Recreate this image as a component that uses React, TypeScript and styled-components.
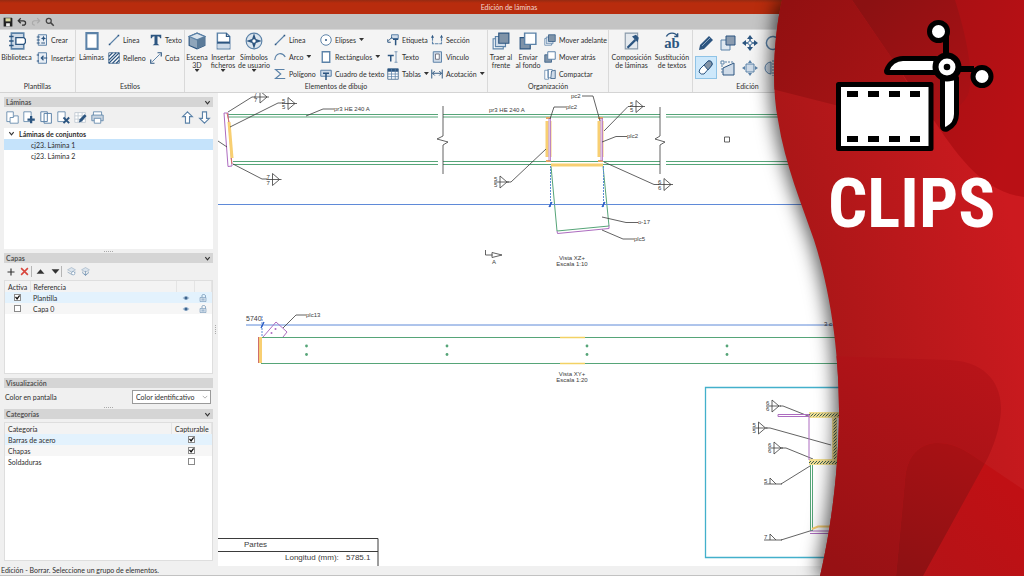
import React from "react";
import styled, { createGlobalStyle } from "styled-components";

const GlobalStyle = createGlobalStyle`
  *, *::before, *::after { box-sizing: border-box; }
  body {
    margin: 0;
    background: #f0f0f0;
    color: #2e2e2e;
    font: 400 7px/8px Lato, "Open Sans", sans-serif;
  }
  button, input, select { font: inherit; color: inherit; margin: 0; padding: 0; }
  button { background: none; border: 0; }
`;

/* ---------- shell ---------- */

const Screen = styled.div`
  position: relative;
  min-height: 100vh;
  overflow: hidden;
  display: flex;
  flex-direction: column;
`;

const TitleBar = styled.header`
  height: 14px;
  display: flex;
  align-items: center;
  justify-content: center;
  background: linear-gradient(#952b12, #b82c0d 3px);
  color: #f3d9d2;
  h1 { margin: 0; font: inherit; padding-right: 6px; }
`;

const QuickBar = styled.nav`
  height: 16px;
  padding: 0 1px;
  display: flex;
  align-items: center;
  background: #c4c4c4;
  border-bottom: 1px solid #d8d8d8;
`;

const QuickButton = styled.button`
  width: 14px;
  height: 14px;
  display: grid;
  place-items: center;
`;

const Ribbon = styled.div`
  height: 63px;
  display: flex;
  background: #f4f4f4;
  border-bottom: 1px solid #d4d4d4;
`;

const Group = styled.section<{ $w: number }>`
  flex: 0 0 ${(p) => p.$w}px;
  display: flex;
  flex-direction: column;
  border-right: 1px solid #d9d9d9;
`;

const GroupBody = styled.div<{ $pad?: number }>`
  flex: 1;
  display: flex;
  align-items: flex-start;
  padding-top: 1px;
  padding-left: ${(p) => p.$pad ?? 0}px;
`;

const GroupName = styled.h2`
  margin: 0;
  height: 10px;
  font: inherit;
  text-align: center;
`;

const BigButton = styled.button<{ $w: number }>`
  flex: 0 0 ${(p) => p.$w}px;
  display: flex;
  flex-direction: column;
  align-items: center;
  white-space: pre;
  padding-top: 1px;
  svg { margin-bottom: 3px; }
`;

const Column = styled.div<{ $w: number }>`
  flex: 0 0 ${(p) => p.$w}px;
  display: flex;
  flex-direction: column;
`;

const SmallButton = styled.button<{ $tall?: boolean }>`
  height: ${(p) => (p.$tall ? 18 : 17)}px;
  display: flex;
  align-items: center;
  gap: 3px;
  white-space: nowrap;
`;

const Caret = styled.span`
  width: 5px;
  height: 3px;
  background: #333;
  clip-path: polygon(0 0, 100% 0, 50% 100%);
`;

const EditGrid = styled.div`
  display: grid;
  grid-template-columns: repeat(4, 22px);
  grid-auto-rows: 25px;
`;

const EditButton = styled.button<{ $on?: boolean }>`
  width: 22px;
  height: 23px;
  display: grid;
  place-items: center;
  background: ${(p) => (p.$on ? "#cde8fb" : "none")};
  border: 1px solid ${(p) => (p.$on ? "#8fc3e6" : "transparent")};
`;

const Workspace = styled.main`
  flex: 1;
  display: flex;
  min-height: 0;
`;

const StatusBar = styled.footer`
  height: 10px;
  padding: 0 1px;
  background: #f0f0f0;
  border-bottom: 1px solid #c2c2c2;
`;

/* ---------- side panels ---------- */

const Side = styled.aside`
  flex: 0 0 218px;
  display: flex;
  background: #f0f0f0;
`;

const Panels = styled.div`
  flex: 1;
  display: flex;
  flex-direction: column;
  padding: 4px 0 5px 4px;
`;

const Gutter = styled.div`
  width: 5px;
  display: grid;
  place-items: center;
`;

const Panel = styled.section<{ $grow?: number; $h?: number }>`
  display: flex;
  flex-direction: column;
  flex: ${(p) => (p.$grow ? `1 1 ${p.$h}px` : `0 0 ${p.$h}px`)};
`;

const PanelHead = styled.h2`
  margin: 0;
  height: 10px;
  padding: 0 2px;
  display: flex;
  align-items: center;
  justify-content: space-between;
  background: #d5d5d5;
  font: inherit;
  font-weight: 700;
  color: #555;
`;

const Tools = styled.div<{ $h: number }>`
  height: ${(p) => p.$h}px;
  display: flex;
  align-items: center;
`;

const Tool = styled.button<{ $w: number }>`
  width: ${(p) => p.$w}px;
  height: 16px;
  display: grid;
  place-items: center;
`;

const ToolSpacer = styled.span`
  flex: 1;
`;

const ToolRule = styled.span`
  width: 1px;
  height: 11px;
  background: #b5b5b5;
`;

const Sheet = styled.div<{ $framed?: boolean }>`
  flex: 1;
  background: #fff;
  border: ${(p) => (p.$framed ? "1px solid #dedede" : "0")};
`;

const Splitter = styled.div<{ $h: number }>`
  height: ${(p) => p.$h}px;
  display: grid;
  place-items: center;
`;

const Tree = styled.ul`
  list-style: none;
  margin: 0;
  padding: 0;
`;

const TreeRow = styled.li<{ $on?: boolean; $root?: boolean }>`
  height: 11px;
  display: flex;
  align-items: center;
  gap: 4px;
  padding-left: ${(p) => (p.$root ? 4 : 27)}px;
  background: ${(p) => (p.$on ? "#c5e3fb" : "none")};
  font-weight: ${(p) => (p.$root ? 700 : 400)};
`;

const Table = styled.table`
  width: 100%;
  table-layout: fixed;
  border-collapse: collapse;
  th, td { height: 11px; padding: 0 3px; text-align: left; font-weight: 400; line-height: 8px; }
  th { background: #f3f3f3; border-right: 1px solid #e4e4e4; }
  td svg, td input { display: block; margin: 0 auto; }
`;

const Row = styled.tr<{ $tone?: "on" | "alt" }>`
  background: ${(p) => (p.$tone === "on" ? "#e3f2fd" : p.$tone === "alt" ? "#f6f6f6" : "#fff")};
`;

const Check = styled.input.attrs({ type: "checkbox" })`
  appearance: none;
  width: 7px;
  height: 7px;
  background: #fff;
  border: 1px solid #8a8a8a;
  &:checked::before {
    content: "";
    display: block;
    width: 5px;
    height: 5px;
    background: #111;
    clip-path: polygon(0 45%, 20% 30%, 40% 55%, 85% 0, 100% 20%, 42% 100%);
  }
`;

const Field = styled.div`
  height: 18px;
  padding: 0 2px 0 1px;
  display: flex;
  align-items: center;
  justify-content: space-between;
`;

const SelectBox = styled.span`
  width: 79px;
  height: 14px;
  display: flex;
  align-items: center;
  background: #fff;
  border: 1px solid #9a9a9a;
  padding-right: 2px;
  select {
    appearance: none;
    flex: 1;
    min-width: 0;
    height: 12px;
    padding-left: 3px;
    border: 0;
    background: none;
    line-height: 12px;
  }
`;

/* ---------- drawing and banner ---------- */

const Canvas = styled.div`
  flex: 1;
  min-width: 0;
  display: flex;
  background: #fff;
  > svg { width: 100%; height: 100%; min-height: 473px; }
`;

const Banner = styled.section`
  position: absolute;
  top: 0;
  right: 0;
  bottom: 0;
  width: 264px;
  display: flex;
  flex-direction: column;
  padding: 18px 28px 0 71px;
  color: #fff;
`;

const BannerShape = styled.svg`
  position: absolute;
  inset: 0;
  width: 100%;
  height: 100%;
  overflow: visible;
  filter: drop-shadow(-4px 0 9px rgba(0, 0, 0, 0.65));
`;

const BannerIcon = styled.svg`
  position: relative;
  width: 164px;
  height: 136px;
`;

const BannerTitle = styled.h2`
  position: relative;
  margin: 16px 0 0 -3px;
  font: 700 69px/68px "Roboto Condensed", "Liberation Sans Narrow", Roboto, sans-serif;
`;

/* ---------- icons ---------- */

const NAVY = "#2c5580";
const BLUE = "#5b82a8";
const PALE = "#cfdbe8";

const icons: Record<string, React.ReactNode> = {
  save: (<><path d="M1 1h13l1 1v13H1z" fill="#222" /><path d="M4 2h8v5H4z" fill="#d8d8a0" /><path d="M5 10h6v5H5z" fill="#eee" /></>),
  undo: <path d="M6 2 2 6l4 4M2 6h8c5 0 5 7 0 7H8" stroke="#333" strokeWidth="2" />,
  redo: <path d="m10 2 4 4-4 4M14 6H6c-5 0-5 7 0 7" stroke="#aaa" strokeWidth="1.8" />,
  search: (<><circle cx="6" cy="6" r="4" stroke="#444" strokeWidth="2" /><path d="m9 9 5 5" stroke="#444" strokeWidth="2.4" /></>),
  library: (<><path d="M3 1h11v14H3z" fill={PALE} stroke={BLUE} strokeWidth="1.4" /><path d="M1 4h4M1 8h4M1 12h4" stroke={NAVY} strokeWidth="1.2" /><path d="M7 5h7l1.500 1.500v3L14 11H7z" fill="#fff" stroke={NAVY} strokeWidth="1.2" /></>),
  create: (<><path d="M3 1h11v14H3z" fill="#e8eef5" stroke={BLUE} strokeWidth="1.300" /><path d="M1 4h4M1 8h4M1 12h4M7 12h5" stroke={NAVY} strokeWidth="1.300" /><path d="m10 2 1 2.500L13.500 6 11 7l-1 3-1-3-2.500-1L9 4.500z" fill={NAVY} /></>),
  insert: (<><path d="M3 1h11v14H3z" fill="#e8eef5" stroke={BLUE} strokeWidth="1.300" /><path d="M1 4h3M1 12h3M15 8H7m3-3L7 8l3 3" stroke={NAVY} strokeWidth="1.500" /></>),
  page: <path d="M3 1h10v14H3z" fill="#fff" stroke={BLUE} strokeWidth="1.800" />,
  line: (<><path d="M2 14 14 2" stroke={BLUE} strokeWidth="1.500" /><path d="M1 13h2v2H1zM13 1h2v2h-2z" fill={NAVY} /></>),
  hatch: (<><path d="M1 1h14v14H1z" fill="#fff" stroke={NAVY} /><path d="m1 6 5-5M1 11 11 1M1 15 15 1M6 15l9-9M11 15l4-4" stroke={NAVY} strokeWidth="1.500" /></>),
  text: <path d="M1 1h14v4.500h-1.500Q13.500 3 10 3v10l2.500 2h-9L6 13V3Q2.500 3 2.500 5.500H1z" fill={NAVY} />,
  measure: (<><path d="M3 13 13 3" stroke={BLUE} strokeWidth="1.300" /><path d="M10 1h5v5M1 10v5h5" stroke={NAVY} strokeWidth="1.600" /></>),
  scene: (<><path d="m8 1 7 3v8l-7 3-7-3V4z" fill="#8fa5ba" stroke={NAVY} /><path d="m1 4 7 3 7-3-7-3z" fill="#d9e3ec" stroke={BLUE} /><path d="M8 7v8l7-3V4z" fill="#5b7b99" /></>),
  file: (<><path d="M3 1h8l3 3v11H3z" fill="#fff" stroke={BLUE} strokeWidth="1.300" /><path d="M3 8.500h11v2H3z" fill={NAVY} /><path d="M3 10.500h11v4H3z" fill={PALE} /><path d="M11 1v3h3" stroke={NAVY} /></>),
  compass: (<><circle cx="8" cy="8" r="7" fill="#dbe5ee" stroke={BLUE} /><path d="m8 1 1.700 5.300L15 8 9.700 9.700 8 15 6.300 9.700 1 8l5.300-1.700z" fill={NAVY} /><circle cx="8" cy="8" r="1.500" fill="#fff" /></>),
  arc: <path d="M1 12C2 2 11 1 15 8" stroke={BLUE} strokeWidth="1.600" />,
  poly: <path d="M14 2H2l7 6-7 6h13" stroke={BLUE} strokeWidth="1.500" />,
  ellipse: (<><circle cx="8" cy="8" r="7" fill="#fff" stroke={BLUE} strokeWidth="1.300" /><circle cx="8" cy="8" r="1.300" fill={NAVY} /></>),
  box: (<><path d="M1 3h14v8H1z" fill={PALE} stroke={BLUE} strokeWidth="1.300" /><path d="M4 6h8v2H9v8H7V8H4z" fill={NAVY} /></>),
  tag: (<><path d="M6 1h9v5H6z" fill={PALE} stroke={BLUE} strokeWidth="1.300" /><path d="M7 4 2 9M1 7v4h4" stroke={NAVY} strokeWidth="1.300" /><path d="M8 6h7v2h-2.500v7h-2V8H8z" fill={NAVY} /></>),
  caret: (<><path d="M1 5h8v2H6v7H4V7H1z" fill={NAVY} /><path d="M12 1v14M10 1h4M10 15h4" stroke={BLUE} /></>),
  grid: (<><path d="M1 1h14v14H1z" fill="#fff" stroke={NAVY} /><path d="M1 1h14v4H1z" fill={NAVY} /><path d="M1 8h14M1 11.500h14M6 1v14M11 1v14" stroke={BLUE} /></>),
  section: (<><path d="M2 4v9h12V4" stroke={BLUE} strokeWidth="1.500" strokeDasharray="5 1" /><path d="m0 5 2-4 2 4zM12 5l2-4 2 4z" fill={NAVY} /></>),
  link: (<><path d="M3 1h11v14H3z" fill={PALE} stroke={BLUE} strokeWidth="1.300" /><path d="M6 4h5v7H6z" fill="#fff" stroke="#556" /></>),
  dimension: <path d="M1 2v12M15 2v12M2 7h12M5 4 2 7l3 3M11 4l3 3-3 3" stroke={NAVY} strokeWidth="1.300" />,
  front: (<><path d="M1 6h9v9H1z" fill="#fff" stroke={BLUE} /><path d="M3 4h9v9H3z" fill={PALE} stroke={BLUE} /><path d="M6 1h9v9H6z" fill="#7f93a8" stroke={NAVY} /></>),
  back: (<><path d="M1 5h9v10H1z" fill="#7f93a8" stroke={NAVY} /><path d="M5 1h10v10H5z" fill="#fff" stroke={BLUE} strokeWidth="1.300" /></>),
  compact: (<><path d="M1 3h5v12H1zM5 2h6v11H5z" fill="#fff" stroke={BLUE} /><path d="m10 4 5-1v11h-6z" fill={PALE} stroke={NAVY} /></>),
  compose: (<><path d="M2 1h11v14H2z" fill="#e4e9ee" stroke="#8899aa" /><path d="m4 14 7-7" stroke={NAVY} strokeWidth="2" /><path d="m8 4 5 5 1-4-2.500-2.500z" fill={NAVY} /></>),
  swap: <path d="M3 4c2-4 8-4 10 0m0-3v3h-3" stroke={NAVY} strokeWidth="1.300" />,
  pencil: (<><path d="M1 15 2 10 11 1l4 4-9 9z" fill={NAVY} /><path d="m4 11 8-8" stroke="#89a4bf" /></>),
  copy: (<><path d="M1 5h9v10H1z" fill="#dfe8f0" stroke={BLUE} /><path d="M6 1h9v9H6z" fill="#8b9cb0" stroke={NAVY} /></>),
  move: (<><path d="M8 0 5 4h6zM8 16l-3-4h6zM0 8l4-3v6zM16 8l-4-3v6z" fill={NAVY} /><path d="M8 3v3M8 10v3M3 8h3M10 8h3" stroke={NAVY} strokeWidth="1.500" /><circle cx="8" cy="8" r="2" stroke={BLUE} /></>),
  rotate: <path d="M14 12a6.500 6.500 0 1 1 0-8" stroke={BLUE} strokeWidth="1.500" />,
  erase: (<><path d="M2 9 10 1q3-1 4 2v2l-8 9q-3 1-5-2z" fill="#fff" stroke={NAVY} /><path d="m6 5 4-4q3-1 4 2v2l-4 5z" fill="#8293a5" stroke={NAVY} /></>),
  stretch: (<><path d="M3 8 14 3v12H3z" fill={PALE} stroke={NAVY} /><path d="M2 2h12M2 2v12" stroke={BLUE} strokeDasharray="2 1" /><path d="M1 1h3v3H1z" fill="#fff" stroke={BLUE} /></>),
  scale: (<><path d="M4 4h8v8H4z" fill={PALE} stroke={BLUE} /><path d="M8 0 6 3h4zM8 16l-2-3h4zM0 8l3-2v4zM16 8l-3-2v4z" fill={BLUE} /></>),
  mirror: (<><path d="M7 2a6 6 0 0 0 0 12z" fill={PALE} stroke={BLUE} /><path d="M9 0v16M11 3l3 2M11 7h4M11 11h4" stroke={BLUE} strokeDasharray="2 1" /></>),
  sheets: (<><path d="M1 1h8v12H1z" fill="#fff" stroke={BLUE} /><path d="M5 8h4l1-2h5v9H5z" fill="#fff" stroke={BLUE} /></>),
  add: (<><path d="M1 1h9v12H1z" fill="#fff" stroke={BLUE} /><path d="M10 6v9M5.500 10.500h9" stroke={NAVY} strokeWidth="2.800" /></>),
  dup: <path d="M1 1h8v12H1zM5 3h9v12H5z" fill="#fff" stroke={BLUE} strokeWidth="1.200" />,
  del: (<><path d="M1 1h9v12H1z" fill="#fff" stroke={BLUE} /><path d="m8 8 7 7m0-7-7 7" stroke={NAVY} strokeWidth="2.300" /></>),
  edit: (<><path d="M1 2h13v12H1zM1 6h13M1 10h13M5 2v12M10 2v12" fill="#fff" stroke="#bcc6d0" /><path d="m6 14 1-4 6-6 2.500 2-6 7z" fill={NAVY} /></>),
  print: (<><path d="M3 6V1h10v5" fill="#fff" stroke={BLUE} /><path d="M1 5h14v7H1z" fill="#c9d5e1" stroke={BLUE} /><path d="M4 9h8v6H4z" fill="#fff" stroke={BLUE} /></>),
  up: <path d="m8 1 6 6h-3.500v8h-5V7H2z" fill="#fff" stroke={BLUE} strokeWidth="1.400" />,
  down: <path d="m8 15 6-6h-3.500V1h-5v8H2z" fill="#fff" stroke={BLUE} strokeWidth="1.400" />,
  plus: <path d="M8 1v14M1 8h14" stroke="#333" strokeWidth="2.300" />,
  cross: <path d="m2 2 12 12M14 2 2 14" stroke="#d8453c" strokeWidth="2.800" />,
  triUp: <path d="M8 4 1 12h14z" fill="#333" />,
  triDown: <path d="M8 12 1 4h14z" fill="#333" />,
  layers: (<><path d="m8 1 7 4-7 4-7-4z" fill="#dbe4ed" stroke="#94a9bd" /><path d="m1 9 7 4 7-4" stroke="#94a9bd" strokeWidth="1.500" /><circle cx="11" cy="11" r="3" fill="#fff" stroke={BLUE} /></>),
  layersDown: (<><path d="m8 1 7 4-7 4-7-4z" fill="#dbe4ed" stroke="#94a9bd" /><path d="M3 8v3l5 3 5-3V8M8 7v8m-3-3 3 3 3-3" stroke={BLUE} /></>),
  eye: (<><path d="M1 8q7-8 14 0-7 8-14 0z" fill="#a9c0d8" /><circle cx="8" cy="8" r="3" fill="#3c648e" /></>),
  lock: (<><path d="M6 7V3q0-2 3-2t4 2v4" stroke={BLUE} strokeWidth="1.300" /><path d="M2 7h12v8H2z" fill="#dce6f0" stroke={BLUE} /><path d="M5 10h6M5 12h6" stroke={BLUE} /></>),
  chevron: <path d="m3 5 5 6 5-6" stroke="#333" strokeWidth="2.600" />,
  thin: <path d="m2 5 6 6 6-6" stroke="#777" strokeWidth="1.500" />,
};

function Icon({ name, size = 12 }: { name: string; size?: number }) {
  return (
    <svg width={size} height={size} viewBox="0 0 16 16" fill="none" aria-hidden="true">
      {icons[name]}
      {name === "swap" && (
        <text x="8" y="14" textAnchor="middle" fontFamily="Liberation Serif, serif" fontWeight="700" fontSize="13" fill={NAVY}>ab</text>
      )}
    </svg>
  );
}

function Big({ icon, w, label, menu }: { icon: string; w: number; label: string; menu?: boolean }) {
  return (
    <BigButton $w={w}>
      <Icon name={icon} size={18} />
      {label}
      {menu && <Caret />}
    </BigButton>
  );
}

type Item = [icon: string, label: string, menu?: boolean];

function SmallColumn({ w, items }: { w: number; items: Item[] }) {
  return (
    <Column $w={w}>
      {items.map(([icon, label, menu]) => (
        <SmallButton key={label} $tall={items.length === 2}>
          <Icon name={icon} />
          {label}
          {menu && <Caret />}
        </SmallButton>
      ))}
    </Column>
  );
}

const Dots = ({ vertical }: { vertical?: boolean }) => (
  <svg width={vertical ? 1 : 9} height={vertical ? 9 : 1} aria-hidden="true">
    <path d={vertical ? "M.5 0v9" : "M0 .5h9"} stroke="#aaa" strokeDasharray="1 1" />
  </svg>
);

function Head({ children, fold = true }: { children: React.ReactNode; fold?: boolean }) {
  return (
    <PanelHead>
      {children}
      {fold && <Icon name="chevron" size={7} />}
    </PanelHead>
  );
}

/* ---------- CAD sheet ---------- */

const INK = "#3b3b3b";
const GREEN = "#56a578";
const PURPLE = "#ad6cc0";
const YELLOW = "#f8cf72";

function Weld({ x, y, n, half }: { x: number; y: number; n: string; half?: boolean }) {
  return (
    <g>
      <path
        d={half ? `M${x - 6} ${y}H${x + 12}M${x} ${y}v-6l6 6` : `M${x - 6} ${y}H${x + 9}M${x} ${y - 6}v12l7-6z`}
        fill="none"
        stroke={INK}
        strokeWidth="0.8"
      />
      <text x={x - 6} y={y - 1}>{n}</text>
      {!half && <text x={x - 6} y={y + 5}>{n}</text>}
    </g>
  );
}

const rivets = [306.5, 447, 587, 727];

function Drawing() {
  return (
    <svg viewBox="218 93 806 473" preserveAspectRatio="xMinYMin slice" role="img" aria-label="Plano" fill="none" strokeWidth="1">
      <defs>
        <pattern id="steel" width="3" height="3" patternUnits="userSpaceOnUse">
          <path d="M0 3 3 0" stroke="#3d6157" />
        </pattern>
      </defs>

      <g stroke={GREEN}>
        <path d="M228 114.500H438M228 117H438M233 161.500H438M233 164.500H438" />
        <path d="M443 114.500H660M443 117H660M443 161.500H660M443 164.500H660" />
        <path d="M666 114.500H1024M666 117H1024M666 161.500H1024M666 164.500H1024" />
        <path d="M551 166 557 231 609 226 603 166" />
        <path d="M261 337.500H1024M261 363.500H1024" />
      </g>

      <path d="M224 113h4l4 53-4 .5z" stroke={PURPLE} />
      <path d="m229 122 3 36" stroke={YELLOW} strokeWidth="3" />
      <path d="m227 113 2 9M231 158l1 6" stroke="#d4715f" />
      <path d="M547 121v36M599 121v36" stroke={YELLOW} strokeWidth="3" />
      <path d="M551 121v36M603 121v36" stroke={YELLOW} />
      <path d="M546 118h5M546 161h5M598 118h5M598 161h5" stroke="#e5a860" strokeWidth="2" />
      <path d="M549 118v43M550.500 118v43M601 118v43M602.500 118v43" stroke={PURPLE} strokeWidth="0.800" />
      <path d="M551 165h52" stroke={YELLOW} strokeWidth="3" />
      <path d="m557 231 .5 2.500 51.500-5v-3" stroke={PURPLE} />

      <path d="M218 204.500H1024M246 325H1024" stroke="#5f8ad8" />
      <path d="M550.500 166v42M603.500 166v42M262 316v20" stroke="#5c8cd4" strokeDasharray="2 1" />
      <path d="m549 207 3-5M602 207l3-5M261 328l3-6" stroke="#2457c4" strokeWidth="1.300" />

      <g stroke={INK} strokeWidth="0.800">
        <path d="M443 106v30l-6 3 11 3-5 3v29M660 107v29l-5 3 10 3-5 3v29" />
        <path d="m228 112 24-15h4M230 127l48-24h5M233 164l29 15h5M218 141l9 6" />
        <path d="m306 116 17-7h11M550 119l4-12h12M582 96h11l7 25M602 142l14-5.500h11" />
        <path d="m602 217 24 5.500h12M602 230l21 9h11M507 182h4l35-33M604 131l24-24.500h3M604 162l50 22.500h5" />
        <path d="M724.500 137h5v5h-5zM485.500 250v5h7M492 252.500l10 2.500-10 2.500z" />
        <path d="m283 328 13-13h10" />
        <path d="M780 406h3l29 11.500M766 428h4l61 17M781 448h5l27 11M781 484l29-18M781 540l32-10" />
        <path d="M218 538.500H378V566M218 551.500H378" strokeWidth="1" />
      </g>

      <path d="M258.500 337v26" stroke="#cf6f6c" />
      <path d="M260.500 337v26" stroke={YELLOW} strokeWidth="3" />
      <path d="M560 337.500h25M560 363.500h25" stroke="#f2d264" strokeWidth="1.500" />
      <path d="m263 337 13-15 11 10-4 5" stroke={PURPLE} />
      <g fill={PURPLE}><circle cx="271.500" cy="333" r="1" /><circle cx="275.500" cy="329" r="1" /></g>
      <g fill={GREEN}>
        {rivets.map((x) => (
          <React.Fragment key={x}>
            <circle cx={x} cy="346" r="1.400" />
            <circle cx={x} cy="354.500" r="1.400" />
          </React.Fragment>
        ))}
      </g>

      <path d="M1024 387.500H705.500v170H1024" stroke="#43b0cb" strokeWidth="1.300" />
      <path d="M809 412h40v6h-40zM809 459h40v6h-40zM832 418h5v41h-5z" fill="#f3e093" />
      <path d="M809 413.500h40v3h-40zM809 461h40v3h-40zM833.500 418h3v41h-3z" fill="url(#steel)" />
      <path d="M778 414.500h31v2h-31zM809 415v45M810 531h40M810 533.500h40" stroke={PURPLE} />
      <path d="M810.500 465v66M812.500 465v66" stroke={GREEN} />
      <path d="m812 529 6-2.500h20" stroke={YELLOW} strokeWidth="2" />

      <g fill={INK} fontFamily="Liberation Sans, Arial, sans-serif" fontSize="6">
        <Weld x={260} y={97} n="7" />
        <Weld x={288} y={103.5} n="5" />
        <Weld x={272.5} y={179.5} n="7" />
        <Weld x={636} y={106.5} n="5" />
        <Weld x={500} y={182} n="5" />
        <Weld x={664} y={184.5} n="6" />
        <Weld x={772} y={406} n="6" />
        <Weld x={758.5} y={428} n="5" />
        <Weld x={774} y={448} n="6" />
        <Weld x={770} y={484} n="5" half />
        <Weld x={770} y={540} n="7" half />
        <text x="334" y="111">pr3 HE 240 A</text>
        <text x="489" y="112">pr3 HE 240 A</text>
        <text x="566" y="109">plc2</text>
        <text x="571" y="98">pc2</text>
        <text x="627" y="138">plc2</text>
        <text x="638" y="224">o-17</text>
        <text x="634" y="241">plc5</text>
        <text x="306" y="317">plc13</text>
        <text x="492" y="264">A</text>
        <text x="824" y="326">3 c</text>
        <g textAnchor="middle">
          <text x="572" y="260">Vista XZ+</text>
          <text x="572" y="266">Escala 1:10</text>
          <text x="572" y="376">Vista XY+</text>
          <text x="572" y="382">Escala 1:20</text>
        </g>
        <text x="246" y="321" fontSize="7">5740</text>
        <g fontSize="8">
          <text x="244" y="547">Partes</text>
          <text x="285" y="560">Longitud (mm):</text>
          <text x="346" y="560">5785.1</text>
        </g>
      </g>
    </svg>
  );
}

/* ---------- promo banner ---------- */

function ClipsBanner() {
  return (
    <Banner>
      <BannerShape viewBox="760 0 264 576" preserveAspectRatio="none" aria-hidden="true">
        <defs>
          <linearGradient id="base" gradientUnits="userSpaceOnUse" x1="800" y1="330" x2="1024" y2="280">
            <stop offset="0" stopColor="#a71617" /><stop offset="1" stopColor="#cc1a1f" />
          </linearGradient>
          <linearGradient id="left" gradientUnits="userSpaceOnUse" x1="774" y1="20" x2="900" y2="110">
            <stop offset="0" stopColor="#921011" /><stop offset="1" stopColor="#aa1416" />
          </linearGradient>
          <linearGradient id="right" gradientUnits="userSpaceOnUse" x1="900" y1="60" x2="1024" y2="100">
            <stop offset="0" stopColor="#a51013" /><stop offset="1" stopColor="#b91015" />
          </linearGradient>
          <linearGradient id="fold" gradientUnits="userSpaceOnUse" x1="870" y1="0" x2="970" y2="90">
            <stop offset="0" stopColor="#8b1112" /><stop offset="1" stopColor="#a91115" />
          </linearGradient>
          <linearGradient id="low" gradientUnits="userSpaceOnUse" x1="850" y1="576" x2="990" y2="370">
            <stop offset="0" stopColor="#971114" /><stop offset="1" stopColor="#b81419" />
          </linearGradient>
          <linearGradient id="corner" gradientUnits="userSpaceOnUse" x1="920" y1="576" x2="1010" y2="490">
            <stop offset="0" stopColor="#b41317" /><stop offset="1" stopColor="#c01014" />
          </linearGradient>
          <linearGradient id="overlap" gradientUnits="userSpaceOnUse" x1="900" y1="576" x2="960" y2="450">
            <stop offset="0" stopColor="#8d1113" /><stop offset="1" stopColor="#a71114" />
          </linearGradient>
          <clipPath id="edge">
            <path d="M782 0C774 35 771 85 778 120C785 165 802 205 814 240C830 290 839 350 839 410C839 465 832 525 820 576H1024V0Z" />
          </clipPath>
          <clipPath id="lobe">
            <path d="M830 356 950 360C990 362 1001 388 1001 408C1001 430 990 455 984 465L923 576H800Z" />
          </clipPath>
        </defs>
        <g clipPath="url(#edge)">
          <path d="M760 0h264v576H760z" fill="url(#base)" />
          <path d="M760 86 835 105 934 130 900 70 852 0H760z" fill="url(#left)" />
          <path d="M852 0 900 70 935 122C960 160 985 192 1024 197V0z" fill="url(#right)" />
          <path d="M852 0H955C966 35 975 75 968 95Q962 108 934 121L900 70z" fill="url(#fold)" />
          <path d="M830 356 950 360C990 362 1001 388 1001 408C1001 430 990 455 984 465L923 576H800Z" fill="url(#low)" />
          <path d="M896 576 905 480C907 450 925 443 938 443C950 443 960 447 972 455L1024 490V576z" fill="url(#corner)" />
          <path clipPath="url(#lobe)" d="M896 576 905 480C907 450 925 443 938 443C950 443 960 447 972 455L1024 490V576z" fill="url(#overlap)" />
        </g>
      </BannerShape>
      <BannerIcon viewBox="831 18 164 136" fill="#fff" stroke="#000" strokeWidth="5" strokeLinejoin="round" aria-hidden="true">
        <path d="M838.500 84.500h92.500v64h-92.500z" />
        <path d="M847 91h11v6h-11zM868 91h11v6h-11zM889 91h11v6h-11zM910 91h10v6h-10zM847 136h11v6h-11zM868 136h11v6h-11zM889 136h11v6h-11zM910 136h10v6h-10z" fill="#000" stroke="none" />
        <path d="M946 36v22M958 69h16" strokeWidth="6" />
        <circle cx="938.500" cy="31.500" r="9" />
        <circle cx="982" cy="76.500" r="9" />
        <path d="M886.500 71C889 63 896 58.500 903 58.500H936V72.500H888Q886.500 72.500 886.500 71z" />
        <path d="M942.500 78V126Q942.500 130 947 129C953 126 956.500 121 956.500 114V78z" />
        <circle cx="947" cy="67" r="11.500" strokeWidth="6" />
        <circle cx="947" cy="67" r="3.300" fill="#000" stroke="none" />
      </BannerIcon>
      <BannerTitle>CLIPS</BannerTitle>
    </Banner>
  );
}

const editTools: [string, string][] = [
  ["pencil", "Editar"], ["copy", "Copiar"], ["move", "Mover"], ["rotate", "Girar"],
  ["erase", "Borrar"], ["stretch", "Estirar"], ["scale", "Escalar"], ["mirror", "Simetría"],
];

const sheetTools: [string, string][] = [
  ["sheets", "Conjuntos"], ["add", "Añadir"], ["dup", "Duplicar"], ["del", "Eliminar"], ["edit", "Modificar"], ["print", "Imprimir"],
];

export default function App() {
  return (
    <Screen>
      <GlobalStyle />
      <TitleBar><h1>Edición de láminas</h1></TitleBar>
      <QuickBar>
        {[["save", "Guardar"], ["undo", "Deshacer"], ["redo", "Rehacer"], ["search", "Buscar"]].map(([icon, label]) => (
          <QuickButton key={icon} aria-label={label}><Icon name={icon} size={10} /></QuickButton>
        ))}
      </QuickBar>

      <Ribbon>
        <Group $w={76}>
          <GroupBody>
            <Big icon="library" w={33} label="Biblioteca" />
            <Column $w={3} />
            <SmallColumn w={38} items={[["create", "Crear"], ["insert", "Insertar"]]} />
          </GroupBody>
          <GroupName>Plantillas</GroupName>
        </Group>
        <Group $w={109}>
          <GroupBody $pad={1}>
            <Big icon="page" w={29} label="Láminas" />
            <Column $w={2} />
            <SmallColumn w={42} items={[["line", "Línea"], ["hatch", "Relleno"]]} />
            <SmallColumn w={34} items={[["text", "Texto"], ["measure", "Cota"]]} />
          </GroupBody>
          <GroupName>Estilos</GroupName>
        </Group>
        <Group $w={303}>
          <GroupBody>
            <Big icon="scene" w={24} label={"Escena\n3D"} menu />
            <Big icon="file" w={28} label={"Insertar\nficheros"} menu />
            <Big icon="compass" w={34} label={"Símbolos\nde usuario"} menu />
            <Column $w={3} />
            <SmallColumn w={46} items={[["line", "Línea"], ["arc", "Arco", true], ["poly", "Polígono"]]} />
            <SmallColumn w={67} items={[["ellipse", "Elipses", true], ["page", "Rectángulos", true], ["box", "Cuadro de texto"]]} />
            <SmallColumn w={44} items={[["tag", "Etiqueta"], ["caret", "Texto"], ["grid", "Tablas", true]]} />
            <SmallColumn w={54} items={[["section", "Sección"], ["link", "Vínculo"], ["dimension", "Acotación", true]]} />
          </GroupBody>
          <GroupName>Elementos de dibujo</GroupName>
        </Group>
        <Group $w={121}>
          <GroupBody>
            <Big icon="front" w={26} label={"Traer al\nfrente"} />
            <Big icon="back" w={28} label={"Enviar\nal fondo"} />
            <Column $w={2} />
            <SmallColumn w={62} items={[["front", "Mover adelante"], ["back", "Mover atrás"], ["compact", "Compactar"]]} />
          </GroupBody>
          <GroupName>Organización</GroupName>
        </Group>
        <Group $w={84}>
          <GroupBody $pad={1}>
            <Big icon="compose" w={43} label={"Composición\nde láminas"} />
            <Big icon="swap" w={38} label={"Sustitución\nde textos"} />
          </GroupBody>
        </Group>
        <Group $w={110}>
          <GroupBody $pad={2}>
            <EditGrid>
              {editTools.map(([icon, label]) => (
                <EditButton key={icon} aria-label={label} $on={icon === "erase"}><Icon name={icon} size={16} /></EditButton>
              ))}
            </EditGrid>
          </GroupBody>
          <GroupName>Edición</GroupName>
        </Group>
      </Ribbon>

      <Workspace>
        <Side>
          <Panels>
            <Panel $h={152}>
              <Head>Láminas</Head>
              <Tools $h={21}>
                {sheetTools.map(([icon, label]) => (
                  <Tool key={icon} $w={17} aria-label={label}><Icon name={icon} size={13} /></Tool>
                ))}
                <ToolSpacer />
                <Tool $w={17} aria-label="Subir"><Icon name="up" size={13} /></Tool>
                <Tool $w={17} aria-label="Bajar"><Icon name="down" size={13} /></Tool>
              </Tools>
              <Sheet>
                <Tree>
                  <TreeRow $root><Icon name="chevron" size={7} />Láminas de conjuntos</TreeRow>
                  <TreeRow $on>cj23. Lámina 1</TreeRow>
                  <TreeRow>cj23. Lámina 2</TreeRow>
                </Tree>
              </Sheet>
            </Panel>
            <Splitter $h={4}><Dots /></Splitter>
            <Panel $h={121}>
              <Head>Capas</Head>
              <Tools $h={17}>
                <Tool $w={13} aria-label="Añadir capa"><Icon name="plus" size={8} /></Tool>
                <Tool $w={14} aria-label="Borrar capa"><Icon name="cross" size={9} /></Tool>
                <ToolRule />
                <Tool $w={17} aria-label="Subir capa"><Icon name="triUp" size={9} /></Tool>
                <Tool $w={12} aria-label="Bajar capa"><Icon name="triDown" size={9} /></Tool>
                <ToolRule />
                <Tool $w={19} aria-label="Ver capas"><Icon name="layers" size={9} /></Tool>
                <Tool $w={6} aria-label="Importar capas"><Icon name="layersDown" size={9} /></Tool>
              </Tools>
              <Sheet $framed>
                <Table>
                  <colgroup><col width="25" /><col /><col width="18" /><col width="17" /></colgroup>
                  <thead><tr><th>Activa</th><th>Referencia</th><th /><th /></tr></thead>
                  <tbody>
                    {["Plantilla", "Capa 0"].map((name, i) => (
                      <Row key={name} $tone={i === 0 ? "on" : "alt"}>
                        <td><Check aria-label={name} defaultChecked={i === 0} /></td>
                        <td>{name}</td>
                        <td><Icon name="eye" size={8} /></td>
                        <td><Icon name="lock" size={8} /></td>
                      </Row>
                    ))}
                  </tbody>
                </Table>
              </Sheet>
            </Panel>
            <Splitter $h={4} />
            <Panel $h={28}>
              <Head fold={false}>Visualización</Head>
              <Field>
                <label htmlFor="screen-colour">Color en pantalla</label>
                <SelectBox>
                  <select id="screen-colour"><option>Color identificativo</option></select>
                  <Icon name="thin" size={6} />
                </SelectBox>
              </Field>
            </Panel>
            <Splitter $h={3}><Dots /></Splitter>
            <Panel $grow={1} $h={152}>
              <Head>Categorías</Head>
              <Splitter $h={3} />
              <Sheet $framed>
                <Table>
                  <colgroup><col /><col width="40" /></colgroup>
                  <thead><tr><th>Categoría</th><th>Capturable</th></tr></thead>
                  <tbody>
                    {["Barras de acero", "Chapas", "Soldaduras"].map((name, i) => (
                      <Row key={name} $tone={i === 0 ? "on" : i === 1 ? "alt" : undefined}>
                        <td>{name}</td>
                        <td><Check aria-label={name} defaultChecked={i < 2} /></td>
                      </Row>
                    ))}
                  </tbody>
                </Table>
              </Sheet>
            </Panel>
          </Panels>
          <Gutter><Dots vertical /></Gutter>
        </Side>
        <Canvas><Drawing /></Canvas>
      </Workspace>
      <StatusBar>Edición - Borrar. Seleccione un grupo de elementos.</StatusBar>
      <ClipsBanner />
    </Screen>
  );
}
